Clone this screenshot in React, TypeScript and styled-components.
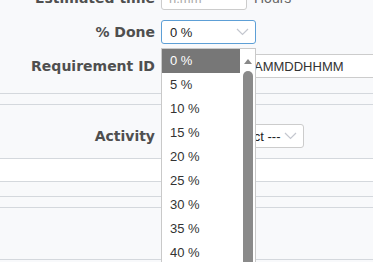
import styled, { createGlobalStyle } from "styled-components";

const GlobalStyle = createGlobalStyle`
  body {
    margin: 0;
    background: #f8f9fb;
    font-family: "Liberation Sans", Arial, sans-serif;
    overflow: hidden;
  }
`;

const Page = styled.div`
  width: 373px;
  height: 262px;
  overflow: hidden;
`;

const Fields = styled.div`
  display: flex;
  flex-direction: column;
  gap: 10px;
  margin-top: -14px;
  padding-bottom: 15px;
  border-bottom: 1px solid #d4d8dd;
`;

const Row = styled.div`
  display: grid;
  grid-template-columns: 155px auto;
  column-gap: 6px;
  align-items: center;
  height: 24px;
`;

const Label = styled.label`
  font-family: "DejaVu Sans", Verdana, sans-serif;
  font-weight: bold;
  font-size: 14px;
  color: #4f4f4f;
  text-align: right;
  white-space: nowrap;
`;

const Field = styled.div`
  display: flex;
  align-items: center;
  gap: 7px;
  position: relative;
  min-width: 0;
`;

const TextInput = styled.input<{ $width: number; $indent?: number }>`
  box-sizing: border-box;
  width: ${(p) => p.$width}px;
  height: 24px;
  border: 1px solid #ccc;
  border-radius: 3px;
  background: #fff;
  padding: 0 0 0 ${(p) => p.$indent ?? 7}px;
  font-family: "Liberation Sans", Arial, sans-serif;
  font-size: 13px;
  outline: none;

  &::placeholder {
    color: ${(p) => (p.$indent ? "#333" : "#aaa")};
  }
`;

const Unit = styled.span`
  font-size: 14px;
  color: #666;
`;

const Select = styled.div<{ $width: number; $focused?: boolean }>`
  box-sizing: border-box;
  width: ${(p) => p.$width}px;
  height: 24px;
  display: flex;
  align-items: center;
  justify-content: space-between;
  padding: 0 6px 0 8px;
  background: #fff;
  border: 1px solid ${(p) => (p.$focused ? "#5d9fd6" : "#ccc")};
  border-radius: 3px;
  font-size: 13px;
  color: #222;
  white-space: nowrap;
`;

const Chevron = () => (
  <svg width="13" height="8" viewBox="0 0 13 8">
    <polyline points="1,1 6.5,6.5 12,1" fill="none" stroke="#c4c7cf" strokeWidth="1.2" />
  </svg>
);

const Dropdown = styled.div`
  position: absolute;
  top: calc(100% + 4px);
  left: 0;
  box-sizing: border-box;
  width: 95px;
  height: 260px;
  display: flex;
  background: #fff;
  border: 1px solid #c9c9c9;
  overflow: hidden;
  z-index: 10;
`;

const OptionList = styled.ul`
  flex: 1;
  margin: 0;
  padding: 0;
  list-style: none;
`;

const Option = styled.li<{ $active?: boolean }>`
  height: 24px;
  line-height: 24px;
  padding-left: 8px;
  font-size: 13px;
  color: ${(p) => (p.$active ? "#fff" : "#333")};
  background: ${(p) => (p.$active ? "#777" : "transparent")};
`;

const ScrollTrack = styled.div`
  width: 15px;
  display: flex;
  flex-direction: column;
  align-items: center;
`;

const ScrollArrow = styled.div`
  margin-top: 10px;
  width: 0;
  height: 0;
  border-left: 4.5px solid transparent;
  border-right: 4.5px solid transparent;
  border-bottom: 5px solid #888;
`;

const ScrollThumb = styled.div`
  margin-top: 7px;
  width: 10px;
  flex: 1;
  background: #8a8a8a;
  border-radius: 5px 5px 0 0;
`;

const Band = styled.div<{ $h: number; $white?: boolean }>`
  height: ${(p) => p.$h}px;
  background: ${(p) => (p.$white ? "#fff" : "transparent")};
  border-bottom: 1px solid #d4d8dd;
`;

const ActivitySection = styled.div`
  padding: 19px 0 10px;
  border-bottom: 1px solid #d4d8dd;
`;

const percents = Array.from({ length: 21 }, (_, i) => i * 5);

export default function App() {
  return (
    <Page>
      <GlobalStyle />
      <Fields>
        <Row>
          <Label>Estimated time</Label>
          <Field>
            <TextInput $width={86} placeholder="h.mm" />
            <Unit>Hours</Unit>
          </Field>
        </Row>
        <Row>
          <Label>% Done</Label>
          <Field>
            <Select $width={95} $focused>
              <span>0 %</span>
              <Chevron />
            </Select>
            <Dropdown>
              <OptionList>
                {percents.map((v) => (
                  <Option key={v} $active={v === 0}>
                    {v} %
                  </Option>
                ))}
              </OptionList>
              <ScrollTrack>
                <ScrollArrow />
                <ScrollThumb />
              </ScrollTrack>
            </Dropdown>
          </Field>
        </Row>
        <Row>
          <Label>Requirement ID</Label>
          <Field>
            <TextInput $width={240} $indent={66} placeholder="AAAAMMDDHHMM" />
          </Field>
        </Row>
      </Fields>
      <Band $h={10} />
      <ActivitySection>
        <Row>
          <Label>Activity</Label>
          <Field>
            <Select $width={143}>
              <span>--- Please select ---</span>
              <Chevron />
            </Select>
          </Field>
        </Row>
      </ActivitySection>
      <Band $h={22} $white />
      <Band $h={14} />
      <Band $h={10} />
      <Band $h={51} />
    </Page>
  );
}
